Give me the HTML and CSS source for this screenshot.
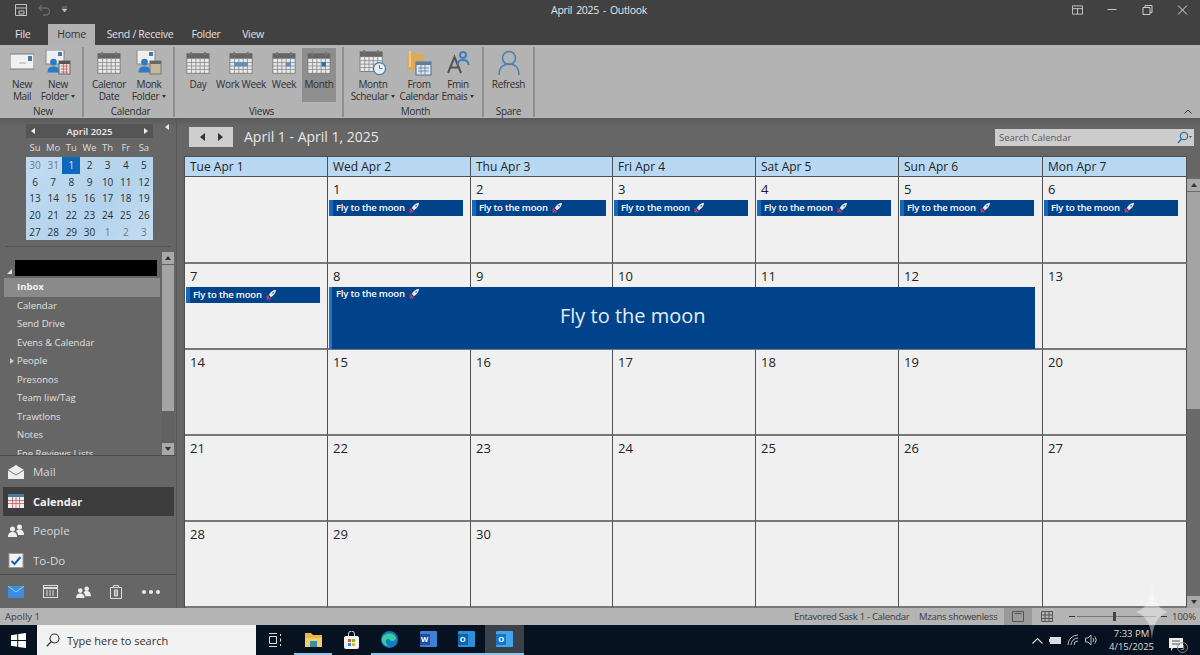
FILE: index.html
```html
<!DOCTYPE html>
<html lang="en">
<head>
<meta charset="utf-8">
<title>April 2025 - Outlook</title>
<link rel="stylesheet" href="styles.css">
</head>
<body>
<svg class="defs" width="0" height="0" aria-hidden="true">
  <defs>
    <symbol id="cal" viewBox="0 0 28 26">
      <rect x="1" y="2" width="26" height="23" fill="#e9e9e9" stroke="#777"/>
      <rect x="1" y="2" width="26" height="6" fill="#666"/>
      <path d="M6 0v4M22 0v4" stroke="#777" stroke-width="2"/>
      <path d="M1 12.500h26M1 16.500h26M1 20.500h26M6.500 8v17M11.500 8v17M16.500 8v17M21.500 8v17" stroke="#8e8e8e" stroke-width="1"/>
    </symbol>
    <symbol id="person" viewBox="0 0 20 20">
      <circle cx="10" cy="6" r="4.500" fill="#2a7cc4"/>
      <path d="M2 20c0-6 3-8 8-8s8 2 8 8z" fill="#2a7cc4"/>
    </symbol>
    <symbol id="rocket" viewBox="0 0 14 14">
      <path d="M13 1C9 1.500 6 4 4.500 7L7 9.500C10 8 12.500 5 13 1z" fill="#e6e6ee"/>
      <path d="M4.500 7L2 7.500 1 10l3-.8zM7 9.500l-.5 2.500L4 13l.8-3z" fill="#b23a5a"/>
      <path d="M4.500 9.500L2 12" stroke="#d58" stroke-width="1.300"/>
      <circle cx="9.500" cy="4.500" r="1.100" fill="#55709a"/>
    </symbol>
  </defs>
</svg>

<div class="app">
  <header class="titlebar">
    <div class="qat">
      <svg class="qat-app" width="14" height="14" viewBox="0 0 14 14"><path d="M1.500 1.500h11v11h-11zM1.500 5h11M5 8h5v3H5z" fill="none" stroke="#c4c4c4"/></svg>
      <svg class="qat-undo" width="13" height="12" viewBox="0 0 13 12"><path d="M4 1L1 4l3 3M1 4h7a3.500 3.500 0 0 1 0 7H5" fill="none" stroke="#6a6a6a" stroke-width="1.300"/></svg>
      <svg class="qat-more" width="7" height="7" viewBox="0 0 7 7"><path d="M1 1h5M1 3h5l-2.500 3z" fill="#c4c4c4" stroke="#c4c4c4" stroke-width=".5"/></svg>
    </div>
    <div class="title">April 2025 - Outlook</div>
    <div class="winbtns">
      <svg width="12" height="10" viewBox="0 0 12 10"><path d="M.5.500h11v9H.5zM.5 3.500h11M6 3.500v6" fill="none" stroke="#ccc"/></svg>
      <svg width="10" height="10" viewBox="0 0 10 10"><path d="M0 4.500h9" stroke="#ccc"/></svg>
      <svg width="10" height="10" viewBox="0 0 10 10"><path d="M.5 2.500h7v7h-7zM2.500 2.500v-2h7v7h-2" fill="none" stroke="#ccc"/></svg>
      <svg width="10" height="10" viewBox="0 0 10 10"><path d="M.5.500l9 9M9.500.500l-9 9" stroke="#ddd"/></svg>
    </div>
  </header>

  <nav class="tabs">
    <span class="tab t-file">File</span>
    <span class="tab t-home">Home</span>
    <span class="tab t-send">Send / Receive</span>
    <span class="tab t-folder">Folder</span>
    <span class="tab t-view">View</span>
  </nav>

  <section class="ribbon">
    <div class="group g-new">
      <div class="btns">
        <div class="rb w36">
          <svg class="ric" width="24" height="26" viewBox="0 0 24 26"><rect y="4" width="24" height="15" fill="#f1f1f1" stroke="#7a7a7a"/><path d="M9 13h7" stroke="#aaa"/><rect x="18" y="6" width="4" height="5" fill="#4a79a5"/></svg>
          <span>New<br>Mail</span>
        </div>
        <div class="rb w36">
          <svg class="ric" width="26" height="26" viewBox="0 0 26 26"><rect x="1" y="0" width="18" height="14" fill="#efefef" stroke="#888"/><rect x="13" y="2" width="4" height="4" fill="#4a79a5"/><use href="#person" x="1" y="6" width="15" height="18"/><rect x="14" y="11" width="11" height="13" fill="#e8dcd8" stroke="#666"/><rect x="14" y="11" width="11" height="3" fill="#555"/><path d="M16 16h7M16 19h7M16 22h7M18.500 14v10M21.500 14v10" stroke="#c66" stroke-width=".8"/></svg>
          <span>New<br>Folder<i class="caret"></i></span>
        </div>
      </div>
      <div class="glabel">New</div>
    </div>

    <div class="group g-cal">
      <div class="btns">
        <div class="rb w42">
          <svg class="ric" width="24" height="26" viewBox="0 0 28 26"><use href="#cal"/></svg>
          <span>Calenor<br>Date</span>
        </div>
        <div class="rb w38">
          <svg class="ric" width="26" height="26" viewBox="0 0 26 26"><rect x="1" y="0" width="18" height="14" fill="#efefef" stroke="#888"/><rect x="13" y="2" width="4" height="4" fill="#4a79a5"/><use href="#person" x="1" y="6" width="15" height="18"/><rect x="14" y="11" width="11" height="13" fill="#c8b89a" stroke="#777"/><rect x="14" y="11" width="11" height="3" fill="#666"/></svg>
          <span>Monk<br>Folder<i class="caret"></i></span>
        </div>
      </div>
      <div class="glabel">Calendar</div>
    </div>

    <div class="group g-views">
      <div class="btns">
        <div class="rb w34">
          <svg class="ric" width="24" height="26" viewBox="0 0 28 26"><use href="#cal"/></svg>
          <span>Day</span>
        </div>
        <div class="rb w52">
          <svg class="ric" width="24" height="26" viewBox="0 0 28 26"><use href="#cal"/><rect x="6" y="12" width="16" height="5" fill="#5f8fc0"/></svg>
          <span>Work Week</span>
        </div>
        <div class="rb w34">
          <svg class="ric" width="24" height="26" viewBox="0 0 28 26"><use href="#cal"/><rect x="16" y="12" width="6" height="5" fill="#5f8fc0"/></svg>
          <span>Week</span>
        </div>
        <div class="rb w34 active">
          <svg class="ric" width="24" height="26" viewBox="0 0 28 26"><use href="#cal"/><rect x="17" y="12" width="5" height="5" fill="#1f6fa8"/></svg>
          <span>Month</span>
        </div>
      </div>
      <div class="glabel">Views</div>
    </div>

    <div class="group g-month">
      <div class="btns">
        <div class="rb w48">
          <svg class="ric" width="28" height="26" viewBox="0 0 30 28"><use href="#cal" width="26" height="24"/><circle cx="22" cy="20" r="6.500" fill="#e8eef4" stroke="#4a79a5" stroke-width="1.300"/><path d="M22 16v4h3" fill="none" stroke="#4a79a5"/></svg>
          <span>Montn<br>Scheular<i class="caret"></i></span>
        </div>
        <div class="rb w44">
          <svg class="ric" width="26" height="26" viewBox="0 0 26 26"><path d="M1 4h4l1-2h4l1 2h7v16H1z" fill="#dca95c"/><path d="M4 1v16" stroke="#eccb8a" stroke-width="2"/><rect x="10" y="12" width="15" height="13" fill="#dfe5ea" stroke="#4f6f8f"/><rect x="10" y="12" width="15" height="3" fill="#5f7f9f"/><path d="M12 18h11M12 21h11M15 15v9M19 15v9" stroke="#5f7f9f" stroke-width=".8"/></svg>
          <span>From<br>Calendar</span>
        </div>
        <div class="rb w34">
          <svg class="ric" width="24" height="26" viewBox="0 0 24 26"><path d="M2 23L8.500 7l6.500 16M4.500 17.500h8" fill="none" stroke="#555" stroke-width="2"/><circle cx="17" cy="5" r="3" fill="none" stroke="#3d80bd" stroke-width="2"/><path d="M11.500 15c0-4 2-5 5.500-5s5.500 1 5.500 5" fill="none" stroke="#3d80bd" stroke-width="2"/></svg>
          <span>Fmin<br>Emais<i class="caret"></i></span>
        </div>
      </div>
      <div class="glabel">Month</div>
    </div>

    <div class="group g-spare">
      <div class="btns">
        <div class="rb w50">
          <svg class="ric" width="24" height="26" viewBox="0 0 24 26"><circle cx="12" cy="8" r="6.500" fill="none" stroke="#4a7fb3" stroke-width="1.500"/><path d="M2 25c0-7 4-11 10-11s10 4 10 11" fill="none" stroke="#4a7fb3" stroke-width="1.500"/></svg>
          <span>Refresh</span>
        </div>
      </div>
      <div class="glabel">Spare</div>
    </div>
    <svg class="rcollapse" width="8" height="5" viewBox="0 0 8 5"><path d="M.5 4.500L4 1l3.500 3.500" fill="none" stroke="#333"/></svg>
  </section>

  <main class="main">
    <aside class="sidebar">
      <div class="sbtop">
        <div class="mini">
          <div class="mini-head"><i class="tri-l"></i><b>April 2025</b><i class="tri-r"></i></div>
          <div class="mini-wd"><span>Su</span><span>Mo</span><span>Tu</span><span>We</span><span>Th</span><span>Fr</span><span>Sa</span></div>
          <div class="mini-days">
            <span class="off">30</span><span class="off">31</span><span class="sel">1</span><span>2</span><span>3</span><span>4</span><span>5</span>
            <span>6</span><span>7</span><span>8</span><span>9</span><span>10</span><span>11</span><span>12</span>
            <span>13</span><span>14</span><span>15</span><span>16</span><span>17</span><span>18</span><span>19</span>
            <span>20</span><span>21</span><span>22</span><span>23</span><span>24</span><span>25</span><span>26</span>
            <span>27</span><span>28</span><span>29</span><span>30</span><span class="off">1</span><span class="off">2</span><span class="off">3</span>
          </div>
        </div>
        <i class="sb-collapse"></i>
      </div>

      <div class="folders">
        <div class="flist">
          <div class="acct"><i class="acct-tri"></i><span class="redact"></span></div>
          <div class="fi on">Inbox</div>
          <div class="fi">Calendar</div>
          <div class="fi">Send Drive</div>
          <div class="fi">Evens &amp; Calendar</div>
          <div class="fi"><i class="exp"></i>People</div>
          <div class="fi">Presonos</div>
          <div class="fi">Team Iiw/Tag</div>
          <div class="fi">Trawtlons</div>
          <div class="fi">Notes</div>
          <div class="fi">Fne Reviews Lists</div>
        </div>
        <div class="vscroll vs-side">
          <span class="sb-btn"><i class="up"></i></span>
          <span class="sb-thumb"></span>
          <span class="sb-btn"><i class="down"></i></span>
        </div>
      </div>

      <div class="navs">
        <div class="nv">
          <svg width="16" height="14" viewBox="0 0 16 14"><path d="M0 5L8 0l8 5v9H0z" fill="#eee"/><path d="M0 5l8 5 8-5" fill="none" stroke="#777"/></svg>
          <span>Mail</span>
        </div>
        <div class="nv cur">
          <svg width="16" height="14" viewBox="0 0 16 14"><rect width="16" height="14" fill="#eee"/><rect width="16" height="3" fill="#4a79a5"/><path d="M0 6.500h16M0 9.500h16M4.500 3v11M8 3v11M11.500 3v11" stroke="#c05a5a" stroke-width=".8"/></svg>
          <span>Calendar</span>
        </div>
        <div class="nv">
          <svg width="16" height="13" viewBox="0 0 16 13"><circle cx="4.500" cy="5" r="2.500" fill="#eee"/><path d="M0 13c0-4 2-5 4.500-5S9 9 9 13z" fill="#eee"/><circle cx="11.500" cy="3" r="2.500" fill="#eee"/><path d="M8 7c1-1 2-1.500 3.500-1.500C14 5.500 16 7 16 11h-6c0-2-1-3-2-4z" fill="#eee"/></svg>
          <span>People</span>
        </div>
        <div class="nv">
          <svg width="15" height="15" viewBox="0 0 15 15"><rect x=".5" y=".5" width="14" height="14" fill="#f3f3f3" stroke="#999"/><path d="M3 8l3 3 6-7" fill="none" stroke="#1f5fae" stroke-width="2"/></svg>
          <span>To-Do</span>
        </div>
      </div>

      <div class="minis">
        <svg width="16" height="12" viewBox="0 0 16 12"><rect width="16" height="12" fill="#3c8de0"/><path d="M0 0l8 6 8-6" fill="none" stroke="#a5cdf2"/></svg>
        <svg width="15" height="13" viewBox="0 0 15 13"><rect x=".5" y=".5" width="14" height="12" fill="none" stroke="#ddd"/><path d="M.5 3h14" stroke="#ddd" stroke-width="2"/><path d="M3 6h9M3 8h9M3 10h9" stroke="#ddd" stroke-dasharray="2 1"/></svg>
        <svg width="15" height="12" viewBox="0 0 16 13"><circle cx="4.500" cy="5" r="2.500" fill="#eee"/><path d="M0 13c0-4 2-5 4.500-5S9 9 9 13z" fill="#eee"/><circle cx="11.500" cy="3" r="2.500" fill="#eee"/><path d="M8 7c1-1 2-1.500 3.500-1.500C14 5.500 16 7 16 11h-6c0-2-1-3-2-4z" fill="#eee"/></svg>
        <svg width="12" height="14" viewBox="0 0 12 14"><path d="M.5 2.500h11v11H.5zM3.500 2.500v-2h5v2M4.500 5v6h3V5zM6 5v6" fill="none" stroke="#ddd"/></svg>
        <span class="dots"><i></i><i></i><i></i></span>
      </div>
    </aside>

    <div class="content">
      <div class="cal-top">
        <div class="navbtn"><i class="tri-dl"></i><i class="tri-dr"></i></div>
        <div class="range">April 1 - April 1, 2025</div>
        <div class="search">
          <span>Search Calendar</span>
          <svg width="15" height="13" viewBox="0 0 15 13"><circle cx="7" cy="5" r="3.700" fill="none" stroke="#2f6fa8" stroke-width="1.200"/><path d="M4.500 8L1 12" stroke="#2f6fa8" stroke-width="1.400"/><path d="M12 5h3l-1.500 2z" fill="#555"/></svg>
        </div>
      </div>
      <div class="cal-body">
        <div class="month">
          <div class="dow">Tue Apr 1</div><div class="dow">Wed Apr 2</div><div class="dow">Thu Apr 3</div><div class="dow">Fri Apr 4</div><div class="dow">Sat Apr 5</div><div class="dow">Sun Apr 6</div><div class="dow">Mon Apr 7</div>

          <div class="cell"></div>
          <div class="cell"><span class="n">1</span><div class="ev">Fly to the moon <svg class="rk"><use href="#rocket"/></svg></div></div>
          <div class="cell"><span class="n">2</span><div class="ev">Fly to the moon <svg class="rk"><use href="#rocket"/></svg></div></div>
          <div class="cell"><span class="n">3</span><div class="ev">Fly to the moon <svg class="rk"><use href="#rocket"/></svg></div></div>
          <div class="cell"><span class="n">4</span><div class="ev">Fly to the moon <svg class="rk"><use href="#rocket"/></svg></div></div>
          <div class="cell"><span class="n">5</span><div class="ev">Fly to the moon <svg class="rk"><use href="#rocket"/></svg></div></div>
          <div class="cell"><span class="n">6</span><div class="ev">Fly to the moon <svg class="rk"><use href="#rocket"/></svg></div></div>

          <div class="cell"><span class="n">7</span><div class="ev">Fly to the moon <svg class="rk"><use href="#rocket"/></svg></div></div>
          <div class="cell"><span class="n">8</span></div>
          <div class="cell"><span class="n">9</span></div>
          <div class="cell"><span class="n">10</span></div>
          <div class="cell"><span class="n">11</span></div>
          <div class="cell"><span class="n">12</span></div>
          <div class="cell"><span class="n">13</span></div>

          <div class="cell"><span class="n">14</span></div><div class="cell"><span class="n">15</span></div><div class="cell"><span class="n">16</span></div><div class="cell"><span class="n">17</span></div><div class="cell"><span class="n">18</span></div><div class="cell"><span class="n">19</span></div><div class="cell"><span class="n">20</span></div>
          <div class="cell"><span class="n">21</span></div><div class="cell"><span class="n">22</span></div><div class="cell"><span class="n">23</span></div><div class="cell"><span class="n">24</span></div><div class="cell"><span class="n">25</span></div><div class="cell"><span class="n">26</span></div><div class="cell"><span class="n">27</span></div>
          <div class="cell"><span class="n">28</span></div><div class="cell"><span class="n">29</span></div><div class="cell"><span class="n">30</span></div><div class="cell"></div><div class="cell"></div><div class="cell"></div><div class="cell"></div>

          <div class="ev-wide">
            <div class="ev-wide-head">Fly to the moon <svg class="rk"><use href="#rocket"/></svg></div>
            <div class="ev-wide-title">Fly to the moon</div>
          </div>
        </div>
        <div class="vscroll vs-main">
          <span class="sb-btn"><i class="up"></i></span>
          <span class="sb-thumb"></span>
          <span class="sb-btn"><i class="down"></i></span>
        </div>
      </div>
    </div>
  </main>

  <footer class="status">
    <span class="st-left">Apolly 1</span>
    <span class="st-a">Entavored Sask 1 - Calendar</span>
    <span class="st-b">Mzans showenless</span>
    <span class="st-view"><svg width="12" height="11" viewBox="0 0 12 11"><path d="M.5.500h11v10H.5zM2.500 2.500h7" fill="none" stroke="#555"/></svg></span>
    <svg class="st-grid" width="12" height="11" viewBox="0 0 12 11"><path d="M.5.500h11v10H.5zM.5 4h11M.5 7.500h11M4 .500v10M8 .500v10" fill="none" stroke="#555"/></svg>
    <span class="zoom"><i class="zm"></i><i class="zl"><i class="zt"></i></i><i class="zp"></i></span>
    <span class="st-pct">100%</span>
  </footer>

  <div class="taskbar">
    <div class="start"><svg width="15" height="15" viewBox="0 0 15 15"><path d="M0 2.200L6.200 1.300V7H0zM7.200 1.100L15 0v7H7.200zM0 8h6.200v5.700L0 12.800zM7.200 8H15v7l-7.800-1.100z" fill="#fff"/></svg></div>
    <div class="tsearch">
      <svg width="14" height="14" viewBox="0 0 14 14"><circle cx="8.500" cy="5.500" r="4.500" fill="none" stroke="#333" stroke-width="1.100"/><path d="M5.200 8.800L.8 13.200" stroke="#333" stroke-width="1.300"/></svg>
      <span>Type here to search</span>
    </div>
    <div class="tapps">
      <span class="ta ta-tv"><svg width="14" height="14" viewBox="0 0 14 14"><path d="M1 .500h8M1 13.500h8M1.500 3.500h7v7h-7zM12.500 1v2M12.500 5.500v3M12.500 11v2" fill="none" stroke="#ddd"/></svg></span>
      <span class="ta run"><svg width="17" height="15" viewBox="0 0 17 15"><path d="M0 1h6l2 2h9v11H0z" fill="#e8b949"/><rect y="6" width="17" height="9" fill="#f3cd6a"/><rect x="5" y="9" width="7" height="6" fill="#2f8fb5"/></svg></span>
      <span class="ta"><svg width="15" height="18" viewBox="0 0 15 18"><path d="M4.500 5V3a3 3 0 0 1 6 0v2" fill="none" stroke="#ddd"/><rect y="5" width="15" height="13" rx="2" fill="#f4f4f4"/><rect x="4" y="8" width="3" height="3" fill="#e05a2a"/><rect x="8" y="8" width="3" height="3" fill="#7ab929"/><rect x="4" y="12" width="3" height="3" fill="#2a8ed8"/><rect x="8" y="12" width="3" height="3" fill="#f0b51d"/></svg></span>
      <span class="ta run"><svg width="17" height="17" viewBox="0 0 17 17"><circle cx="8.500" cy="8.500" r="8.500" fill="#0f7cc5"/><path d="M1 7c2-5 10-6 13-2 2 3 0 5-3 5-2 0-2-2-4-2-3 0-3 5 1 7-4 0-8-3-7-8z" fill="#3ccb9e"/></svg></span>
      <span class="ta run"><span class="tile tile-w"><b>W</b></span></span>
      <span class="ta run"><span class="tile tile-o"><b>O</b></span></span>
      <span class="ta run on"><span class="tile tile-o2"><b>O</b></span></span>
    </div>
    <div class="tray">
      <svg width="11" height="7" viewBox="0 0 11 7"><path d="M.5 6.500l5-5 5 5" fill="none" stroke="#ddd" stroke-width="1.100"/></svg>
      <svg width="12" height="9" viewBox="0 0 12 9"><rect x="1" y="1" width="11" height="7" fill="#ddd"/><path d="M0 3h1v3H0z" fill="#ddd"/></svg>
      <svg width="12" height="12" viewBox="0 0 12 12"><path d="M1 11a10 10 0 0 1 10-10M4 11a7 7 0 0 1 7-7M7 11a4 4 0 0 1 4-4" fill="none" stroke="#bbb"/></svg>
      <svg width="13" height="12" viewBox="0 0 13 12"><path d="M.5 4h2.500l3-3v10l-3-3H.5zM8 4a3 3 0 0 1 0 4M10 2.500a6 6 0 0 1 0 7" fill="none" stroke="#bbb"/></svg>
      <div class="clock"><span>7:33 PM</span><span>4/15/2025</span></div>
      <span class="notif"><svg width="14" height="13" viewBox="0 0 14 13"><path d="M0 0h14v10H4l-2 3v-3H0z" fill="#eee"/><path d="M3 3h8M3 6h8" stroke="#555"/></svg><b>3</b></span>
    </div>
  </div>

  <svg class="spark" width="32" height="54" viewBox="0 0 32 54"><path d="M16 0c2 17 6 23 16 27-10 4-14 10-16 27-2-17-6-23-16-27 10-4 14-10 16-27z" fill="#fff" fill-opacity=".42"/></svg>
</div>
</body>
</html>
```

FILE: styles.css
```css
* { box-sizing: border-box; }
html, body { margin: 0; padding: 0; }
body { width: 1200px; height: 655px; overflow: hidden; font-family: "Open Sans", "Noto Sans", "Liberation Sans", sans-serif; background: #666; }
i { display: block; font-style: normal; }
.defs { position: absolute; }
.app { position: relative; width: 1200px; height: 655px; display: flex; flex-direction: column; }

.titlebar { height: 24px; background: #414141; display: flex; align-items: center; padding-left: 14px; color: #e6e6e6; flex: none; }
.qat { width: 530px; display: flex; align-items: center; gap: 10px; margin-top: -5px; }
.title { width: 110px; font-size: 10.500px; letter-spacing: -.3px; word-spacing: 1.500px; white-space: nowrap; text-align: center; margin-top: -5px; }
.winbtns { margin-left: 418px; display: flex; gap: 24px; align-items: center; margin-top: -5px; }
.winbtns svg { width: 11px; }

.tabs { height: 21px; background: #414141; display: flex; flex: none; font-size: 10.500px; letter-spacing: -.3px; color: #e2e2e2; }
.tab { display: flex; align-items: center; justify-content: center; padding-bottom: 1px; }
.t-file { width: 48px; justify-content: flex-start; padding-left: 15px; }
.t-home { width: 47px; background: #b1b1b1; color: #333; }
.t-send { width: 90px; }
.t-folder { width: 42px; }
.t-view { width: 52px; }

.ribbon { height: 73px; background: #b3b3b3; display: flex; padding-left: 4px; flex: none; position: relative; color: #2e2e2e; }
.group { display: flex; flex-direction: column; border-right: 2px solid #8f8f8f; margin: 2px 0 1px; }
.g-new { width: 80px; }
.g-cal { width: 91px; padding-left: 4px; }
.g-views { width: 169px; padding-left: 6px; }
.g-month { width: 140px; padding-left: 5px; }
.g-spare { width: 51px; }
.btns { display: flex; height: 56px; }
.rb { display: flex; flex-direction: column; align-items: center; font-size: 10px; letter-spacing: -.35px; line-height: 12px; text-align: center; padding-top: 3px; white-space: nowrap; flex: none; }
.rb span { display: block; margin-top: 2px; }
.ric { display: block; height: 26px; flex: none; }
.w34 { width: 34px; }
.w36 { width: 36px; }
.w38 { width: 38px; }
.w42 { width: 42px; }
.w44 { width: 44px; }
.w48 { width: 48px; }
.w50 { width: 49px; }
.w52 { width: 52px; }
.active { background: #8e8e8e; margin-left: 1px; margin-top: 1px; height: 54px; padding-top: 2px; }
.caret { display: inline-block; width: 0; height: 0; border: 2.500px solid transparent; border-top: 3px solid #333; border-bottom: 0; margin-left: 3px; vertical-align: 2px; }
.glabel { font-size: 10px; letter-spacing: -.3px; line-height: 12px; text-align: center; margin-top: 2px; color: #2e2e2e; }
.rcollapse { position: absolute; right: 8px; bottom: 4px; }

.main { height: 490px; flex: none; display: flex; background: linear-gradient(#5a5a5a, #666 8px); }
.sidebar { width: 177px; flex: none; border-right: 1px solid #585858; display: flex; flex-direction: column; }
.sbtop { height: 129px; flex: none; border-bottom: 1px solid #555; margin: 0 5px; padding: 6px 0 0 21px; display: flex; }
.mini { width: 127px; }
.mini-head { height: 14px; background: #555; display: flex; align-items: center; justify-content: space-between; padding: 0 5px; color: #eee; font-size: 9.500px; }
.mini-head b { font-weight: 600; }
.tri-l { border: 3px solid transparent; border-right: 4px solid #eee; border-left: 0; }
.tri-r { border: 3px solid transparent; border-left: 4px solid #eee; border-right: 0; }
.mini-wd { height: 19px; display: grid; grid-template-columns: repeat(7, 1fr); align-items: center; text-align: center; font-size: 9.500px; color: #ddd; }
.mini-days { height: 83px; background: linear-gradient(135deg, #c2dcf2, #b3d2ec 60%, #c4ddf2); display: grid; grid-template-columns: repeat(7, 1fr); grid-auto-rows: 1fr; text-align: center; font-size: 10px; color: #2a2e33; }
.mini-days span { display: flex; align-items: center; justify-content: center; }
.mini-days .off { color: #6b7a88; }
.mini-days .sel { background: #0a68bd; color: #dcecf9; }
.sb-collapse { border: 3px solid transparent; border-right: 4px solid #e8e8e8; border-left: 0; width: 0; height: 0; margin: 0 0 0 12px; }

.folders { height: 209px; flex: none; display: flex; padding: 5px 4px 0 4px; border-bottom: 1px solid #4d4d4d; }
.flist { width: 156px; overflow: hidden; color: #e0e0e0; font-size: 9.500px; flex: none; padding-top: 6px; }
.acct { height: 20px; padding: 2px 0 0 11px; position: relative; display: flex; align-items: flex-start; }
.acct-tri { position: absolute; left: 3px; top: 11px; width: 0; height: 0; border-left: 5px solid transparent; border-bottom: 5px solid #ddd; }
.redact { display: block; width: 142px; height: 16px; background: #000; }
.fi { height: 18.500px; line-height: 18px; padding-left: 13px; position: relative; white-space: nowrap; }
.fi.on { background: #8a8a8a; font-weight: 700; color: #f2f2f2; }
.exp { position: absolute; left: 6px; top: 6px; width: 0; height: 0; border: 3.500px solid transparent; border-left: 4px solid #ccc; border-right: 0; }

.vscroll { display: flex; flex-direction: column; flex: none; background: #626262; }
.vs-side { width: 12px; margin-left: 2px; height: 203px; }
.sb-btn { display: flex; align-items: center; justify-content: center; height: 12px; background: #a9a9a9; flex: none; }
.sb-thumb { display: block; background: #a4a4a4; flex: none; margin-top: 1px; }
.vs-side .sb-thumb { height: 146px; }
.vs-side .sb-btn:last-child { margin-top: auto; }
.up { width: 0; height: 0; border: 3.500px solid transparent; border-bottom: 4px solid #333; border-top: 0; }
.down { width: 0; height: 0; border: 3.500px solid transparent; border-top: 4px solid #333; border-bottom: 0; }

.navs { padding: 1px 2px 0 3px; flex: none; height: 119px; border-bottom: 1px solid #4d4d4d; }
.nv { height: 29.500px; display: flex; align-items: center; color: #d8d8d8; font-size: 11.500px; }
.nv svg { margin-left: 5px; width: 16px; flex: none; }
.nv span { margin-left: 9px; }
.nv.cur { background: #3d3d3d; color: #f2f2f2; font-weight: 700; font-size: 11px; }
.minis { display: flex; align-items: center; height: 33px; padding-left: 8px; gap: 18.500px; }
.dots { display: flex; gap: 3px; margin-left: 2px; }
.dots i { width: 4px; height: 4px; border-radius: 50%; background: #eee; }

.content { flex: 1; display: flex; flex-direction: column; padding-left: 7px; }
.cal-top { height: 38px; flex: none; display: flex; align-items: flex-start; padding: 9px 6px 0 5px; }
.navbtn { width: 44px; height: 20px; background: #cecece; display: flex; align-items: center; justify-content: space-around; padding: 0 4px; flex: none; }
.tri-dl { border: 4px solid transparent; border-right: 5px solid #333; border-left: 0; }
.tri-dr { border: 4px solid transparent; border-left: 5px solid #333; border-right: 0; }
.range { color: #e6e6e6; font-size: 14px; line-height: 20px; margin-left: 11px; white-space: nowrap; }
.search { margin-left: auto; margin-top: 2px; width: 199px; height: 17px; background: #cdcdcd; display: flex; align-items: center; justify-content: space-between; padding: 0 2px 0 4px; font-size: 9.500px; color: #5a5a5a; }

.cal-body { display: flex; flex: 1; min-height: 0; }
.month { width: 1003px; flex: none; display: grid; grid-template-columns: 143px 143px 142px 143px 143px 144px 144px; grid-template-rows: 21px 87px 86px 86px 86px 86px; background: #f0f0f0; border-left: 1px solid #505050; position: relative; }
.dow { background: #b9d8f2; border-right: 1px solid #505050; border-top: 1px solid #505050; border-bottom: 1px solid #505050; font-size: 12px; line-height: 20px; padding-left: 5px; color: #222; white-space: nowrap; }
.cell { background: #f0f0f0; border-right: 1px solid #505050; border-bottom: 2px solid #777; padding: 3px 2px 0 1px; min-width: 0; color: #222; }
.n { display: block; font-size: 13px; line-height: 18px; padding-left: 4px; }
.ev { height: 16px; width: 134px; margin-top: 2px; background: #00438a; border-left: 4px solid #1469bd; color: #fff; font-size: 9.500px; font-weight: 600; letter-spacing: -.2px; line-height: 15px; padding: 0 0 1px 3px; white-space: nowrap; display: flex; align-items: center; gap: 3px; }
.rk { width: 12px; height: 12px; flex: none; }
.ev-wide { position: absolute; left: 144px; top: 131px; width: 706px; height: 62px; background: #00438a; border-left: 3px solid #1d78c8; color: #fff; }
.ev-wide-head { font-size: 9.500px; font-weight: 600; letter-spacing: -.2px; height: 14px; line-height: 14px; padding-left: 4px; display: flex; align-items: center; gap: 3px; }
.ev-wide-title { font-size: 20px; line-height: 28px; margin: 1px 0 0 228px; color: #e4edf6; white-space: nowrap; }
.vs-main { width: 13px; padding-top: 2px; background: #6a6a6a; margin-top: 21px; }
.vs-main .sb-thumb { height: 217px; }
.vs-main .sb-btn:last-child { margin-top: auto; }

.status { height: 17px; flex: none; background: #b4b4b4; display: flex; align-items: center; font-size: 9.500px; color: #3c3c3c; white-space: nowrap; }
.status > * { flex: none; }
.st-left { margin-left: 5px; width: 789px; }
.st-a { width: 125px; letter-spacing: -.3px; }
.st-b { width: 85px; letter-spacing: -.25px; }
.st-view { width: 28px; height: 17px; background: #9a9a9a; display: flex; align-items: center; justify-content: center; }
.st-grid { margin-left: 9px; }
.zoom { display: flex; align-items: center; margin-left: 16px; width: 96px; }
.zm { width: 6px; height: 1px; background: #333; flex: none; }
.zl { position: relative; width: 79px; height: 1px; background: #777; margin: 0 5px 0 2px; flex: none; }
.zt { position: absolute; left: 36px; top: -4px; width: 3px; height: 9px; background: #444; }
.zp { width: 6px; height: 1.500px; background: #333; flex: none; }
.st-pct { margin-left: 7px; }

.taskbar { height: 30px; flex: none; background: #06121f; display: flex; align-items: center; color: #eee; }
.start { width: 37px; height: 30px; display: flex; align-items: center; justify-content: center; }
.tsearch { width: 219px; height: 30px; background: #f2f2f2; display: flex; align-items: center; padding-left: 9px; gap: 7px; color: #333; font-size: 11px; }
.tapps { display: flex; height: 30px; width: 270px; }
.ta { width: 38.300px; height: 30px; display: flex; align-items: center; justify-content: center; }
.ta-tv { width: 38px; }
.ta.run { border-bottom: 2px solid #8fc3e8; }
.ta.on { background: #3b4149; }
.tile { width: 17px; height: 16px; display: flex; align-items: center; border-radius: 1px; font-size: 7.500px; color: #fff; }
.tile b { display: flex; width: 10px; height: 11px; align-items: center; justify-content: center; font-weight: 700; }
.tile-w { background: #3f7fd6; }
.tile-w b { background: #1e4f9e; }
.tile-o { background: #2a8fdc; }
.tile-o b { background: #0c62ad; }
.tile-o2 { background: #45a4ea; }
.tile-o2 b { background: #1576c8; }
.tray { flex: 1; display: flex; align-items: center; justify-content: flex-end; gap: 6px; padding-right: 17px; }
.clock { display: flex; flex-direction: column; align-items: center; font-size: 9.500px; line-height: 13px; margin: 0 9px 0 5px; color: #ddd; }
.notif { position: relative; display: block; height: 13px; }
.notif b { position: absolute; right: -5px; bottom: -6px; width: 11px; height: 11px; line-height: 10px; border: 1px solid #888; border-radius: 50%; font-size: 7px; font-weight: 400; text-align: center; color: #ddd; }

.spark { position: absolute; left: 1136px; top: 585px; pointer-events: none; }
```
